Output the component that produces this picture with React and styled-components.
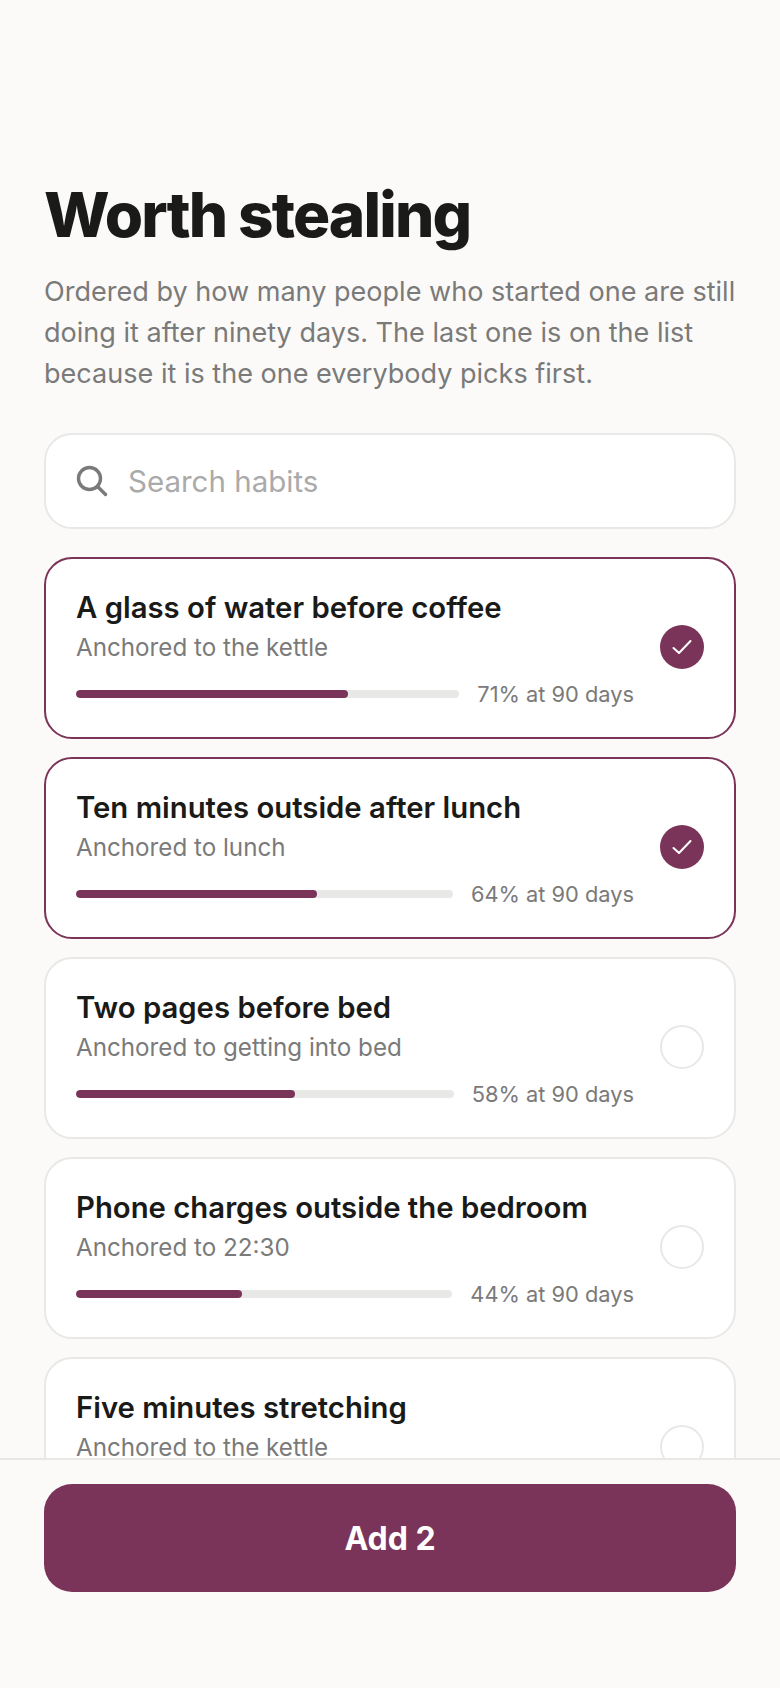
import React from "react";
import styled, { createGlobalStyle } from "styled-components";

const Global = createGlobalStyle`
  html, body { margin: 0; padding: 0; background: #fbfaf8; }
  * { box-sizing: border-box; }
`;

const Screen = styled.div`
  width: 780px;
  height: 1688px;
  display: flex;
  flex-direction: column;
  overflow: hidden;
  background: #fbfaf8;
  font-family: Inter, "Liberation Sans", sans-serif;
  color: #1a1a18;
`;

const Scroll = styled.main`
  flex: 1;
  min-height: 0;
  overflow: hidden;
  padding: 177px 44px 0;
`;

const Title = styled.h1`
  margin: 0;
  font-size: 62px;
  line-height: 76px;
  font-weight: 800;
  letter-spacing: -1.86px;
`;

const Lead = styled.p`
  margin: 18px 0 0;
  font-size: 27.05px;
  line-height: 41px;
  color: #7a7a7a;
`;

const Search = styled.div`
  margin-top: 39px;
  height: 96px;
  display: flex;
  align-items: center;
  gap: 20px;
  padding: 0 30px;
  background: #fff;
  border: 2px solid #e8e8e6;
  border-radius: 28px;
  font-size: 29.5px;
  color: #aaaaaa;
`;

const List = styled.div`
  margin-top: 28px;
  display: flex;
  flex-direction: column;
  gap: 18px;
`;

const Card = styled.article`
  height: 182px;
  flex: none;
  display: flex;
  align-items: center;
  gap: 26px;
  padding: 0 30px;
  background: #fff;
  border: 2px solid ${(p) => (p.$on ? "#7b3459" : "#e8e8e6")};
  border-radius: 28px;
`;

const Body = styled.div`
  flex: 1;
  min-width: 0;
  padding-top: 3px;
`;

const Name = styled.div`
  font-size: 29.3px;
  line-height: 40px;
  font-weight: 600;
`;

const Anchor = styled.div`
  margin-top: 1px;
  font-size: 24.2px;
  line-height: 38px;
  color: #7a7a7a;
`;

const Stat = styled.div`
  margin-top: 10px;
  display: flex;
  align-items: center;
  gap: 18px;
`;

const Track = styled.div`
  flex: 1;
  height: 8px;
  border-radius: 4px;
  background: #e8e8e6;
  overflow: hidden;
`;

const Fill = styled.div`
  height: 100%;
  border-radius: 4px;
  background: #7b3459;
`;

const StatLabel = styled.span`
  font-size: 21.8px;
  line-height: 34px;
  color: #7a7a7a;
  white-space: nowrap;
`;

const Tick = styled.div`
  width: 44px;
  height: 44px;
  flex: none;
  margin-bottom: 2px;
  border-radius: 50%;
  display: flex;
  align-items: center;
  justify-content: center;
  background: ${(p) => (p.$on ? "#7b3459" : "transparent")};
  border: ${(p) => (p.$on ? "none" : "2px solid #e8e8e6")};
`;

const Footer = styled.footer`
  flex: none;
  height: 230px;
  padding: 24px 44px 0;
  background: #fbfaf8;
  border-top: 2px solid #e8e8e6;
`;

const AddButton = styled.button`
  width: 100%;
  height: 108px;
  border: none;
  border-radius: 28px;
  background: #7b3459;
  color: #fff;
  font-family: inherit;
  font-size: 32px;
  font-weight: 700;
`;

const SearchIcon = () => (
  <svg width="32" height="32" viewBox="0 0 32 32" fill="none" stroke="#7a7a7a" strokeWidth="3.4" strokeLinecap="round">
    <circle cx="13.5" cy="13.5" r="11" />
    <path d="M22 22l7.5 7.5" />
  </svg>
);

const CheckIcon = () => (
  <svg width="22" height="22" viewBox="0 0 22 22" fill="none" stroke="#fff" strokeWidth="2" strokeLinecap="round" strokeLinejoin="round">
    <path d="M2.5 12l5.5 5L19.5 5" />
  </svg>
);

const habits = [
  { name: "A glass of water before coffee", anchor: "Anchored to the kettle", pct: 71, on: true },
  { name: "Ten minutes outside after lunch", anchor: "Anchored to lunch", pct: 64, on: true },
  { name: "Two pages before bed", anchor: "Anchored to getting into bed", pct: 58 },
  { name: "Phone charges outside the bedroom", anchor: "Anchored to 22:30", pct: 44 },
  { name: "Five minutes stretching", anchor: "Anchored to the kettle", pct: 38 },
];

export default function App() {
  return (
    <Screen>
      <Global />
      <Scroll>
        <Title>Worth stealing</Title>
        <Lead>
          Ordered by how many people who started one are still doing it after ninety days. The last one is on the list
          because it is the one everybody picks first.
        </Lead>
        <Search>
          <SearchIcon />
          Search habits
        </Search>
        <List>
          {habits.map((h) => (
            <Card key={h.name} $on={h.on}>
              <Body>
                <Name>{h.name}</Name>
                <Anchor>{h.anchor}</Anchor>
                <Stat>
                  <Track>
                    <Fill style={{ width: `${h.pct}%` }} />
                  </Track>
                  <StatLabel>{h.pct}% at 90 days</StatLabel>
                </Stat>
              </Body>
              <Tick $on={h.on}>{h.on && <CheckIcon />}</Tick>
            </Card>
          ))}
        </List>
      </Scroll>
      <Footer>
        <AddButton>Add 2</AddButton>
      </Footer>
    </Screen>
  );
}
